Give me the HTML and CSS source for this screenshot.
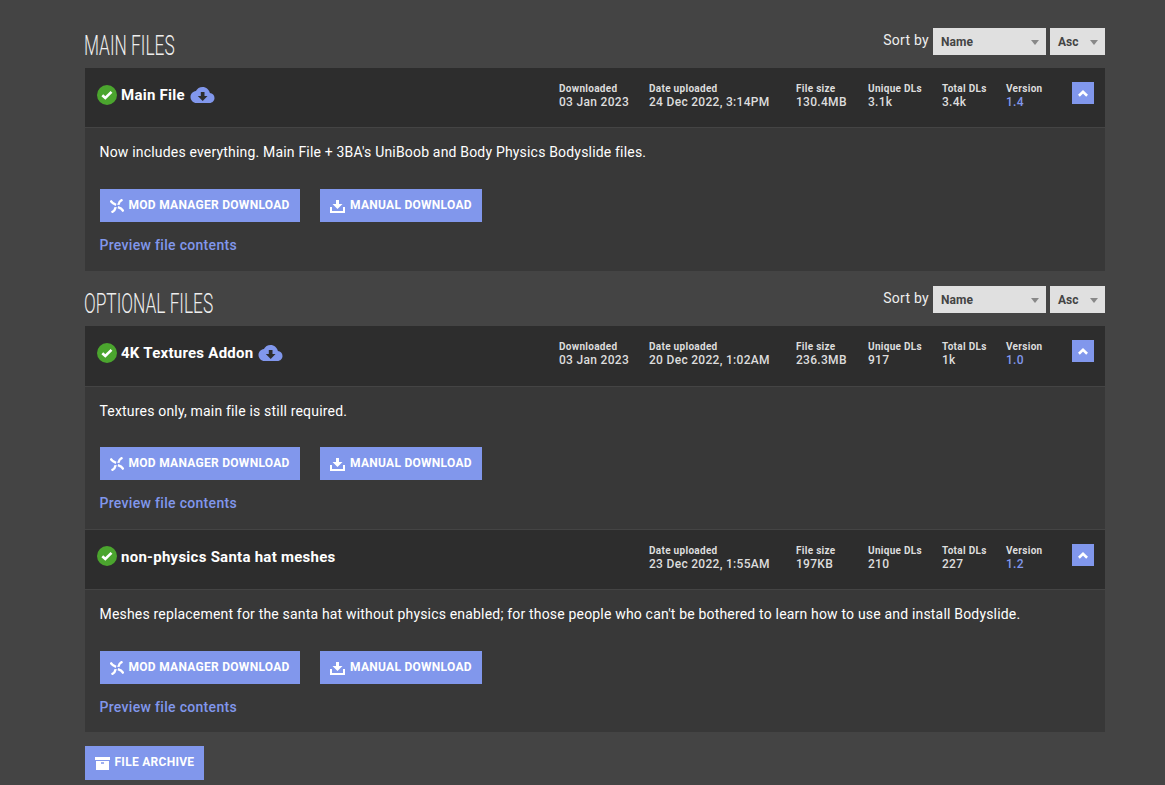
FILE: index.html
```html
<!DOCTYPE html>
<html lang="en">
<head>
    <meta charset="UTF-8">
    <meta name="viewport" content="width=device-width, initial-scale=1.0">
    <title>Mod files</title>
    <link rel="stylesheet" href="styles.css">
</head>
<body>
    <!-- Shared icons -->
    <svg class="icon-defs" width="0" height="0">
        <symbol id="icon-tick" viewBox="0 0 20 20">
            <circle cx="10" cy="10" r="10" fill="#4ba52e"/>
            <path d="M5.300 10.200l3 2.800 6.200-6.200" fill="none" stroke="#fff" stroke-width="2.600"/>
        </symbol>
        <symbol id="icon-cloud" viewBox="0 0 24 16">
            <path fill="#8197ec" fill-rule="evenodd" d="M19.4 6.1C18.7 2.6 15.700 0 12 0 9.100 0 6.600 1.600 5.400 4.100 2.300 4.400 0 7 0 10c0 3.300 2.700 6 6 6h13c2.800 0 5-2.200 5-5 0-2.600-2-4.700-4.600-4.900zM10.300 5h3.700v4h3l-4.800 5-4.900-5h3z"/>
        </symbol>
        <symbol id="icon-nmm" viewBox="0 0 14 14">
            <path fill="none" stroke="#fff" stroke-width="2.400" d="M.5 1.600c1 2 2.900 3.300 5.600 4.200M12.500.7C10.300 1.500 8.800 3.200 8.300 5.900M13.500 12.400c-1-2-2.900-3.300-5.600-4.200M1.500 13.300c2.200-.8 3.700-2.500 4.200-5.200"/>
        </symbol>
        <symbol id="icon-manual" viewBox="0 0 15 13">
            <path fill="#fff" d="M6 0h3v4h3.500L7.500 9l-5-5H6zM0 7h2v4h11V7h2v6H0z"/>
        </symbol>
        <symbol id="icon-archive" viewBox="0 0 15 13">
            <path fill="#fff" fill-rule="evenodd" d="M0 0h15v3H0zM1 4h13v9H1zM6 5.300v1.400h3V5.300z"/>
        </symbol>
        <symbol id="icon-up" viewBox="0 0 10 7">
            <path fill="none" stroke="#fff" stroke-width="2.600" d="M.9 5.800L5 1.900l4.100 3.900"/>
        </symbol>
    </svg>

    <div class="files">
        <section class="file-category">
            <div class="category-header">
                <h2><span>MAIN FILES</span></h2>
                <div class="sort">
                    <label>Sort by</label>
                    <div class="select select-name">Name</div>
                    <div class="select select-order">Asc</div>
                </div>
            </div>

            <div class="file">
                <div class="file-header">
                    <svg class="tick"><use href="#icon-tick"/></svg>
                    <p>Main File</p>
                    <svg class="cloud"><use href="#icon-cloud"/></svg>
                    <ul class="stats">
                        <li class="stat-downloaded"><span>Downloaded</span>03 Jan 2023</li>
                        <li class="stat-date"><span>Date uploaded</span>24 Dec 2022, 3:14PM</li>
                        <li class="stat-size"><span>File size</span>130.4MB</li>
                        <li class="stat-unique"><span>Unique DLs</span>3.1k</li>
                        <li class="stat-total"><span>Total DLs</span>3.4k</li>
                        <li class="stat-version"><span>Version</span><b>1.4</b></li>
                    </ul>
                    <a class="toggle"><svg><use href="#icon-up"/></svg></a>
                </div>
                <div class="file-body tall">
                    <p>Now includes everything. Main File + 3BA's UniBoob and Body Physics Bodyslide files.</p>
                    <div class="buttons">
                        <a class="btn btn-nmm"><svg><use href="#icon-nmm"/></svg>MOD MANAGER DOWNLOAD</a>
                        <a class="btn btn-manual"><svg><use href="#icon-manual"/></svg>MANUAL DOWNLOAD</a>
                    </div>
                    <a class="preview">Preview file contents</a>
                </div>
            </div>
        </section>

        <section class="file-category optional">
            <div class="category-header">
                <h2><span>OPTIONAL FILES</span></h2>
                <div class="sort">
                    <label>Sort by</label>
                    <div class="select select-name">Name</div>
                    <div class="select select-order">Asc</div>
                </div>
            </div>

            <div class="file">
                <div class="file-header tall">
                    <svg class="tick"><use href="#icon-tick"/></svg>
                    <p>4K Textures Addon</p>
                    <svg class="cloud"><use href="#icon-cloud"/></svg>
                    <ul class="stats">
                        <li class="stat-downloaded"><span>Downloaded</span>03 Jan 2023</li>
                        <li class="stat-date"><span>Date uploaded</span>20 Dec 2022, 1:02AM</li>
                        <li class="stat-size"><span>File size</span>236.3MB</li>
                        <li class="stat-unique"><span>Unique DLs</span>917</li>
                        <li class="stat-total"><span>Total DLs</span>1k</li>
                        <li class="stat-version"><span>Version</span><b>1.0</b></li>
                    </ul>
                    <a class="toggle"><svg><use href="#icon-up"/></svg></a>
                </div>
                <div class="file-body short">
                    <p>Textures only, main file is still required.</p>
                    <div class="buttons">
                        <a class="btn btn-nmm"><svg><use href="#icon-nmm"/></svg>MOD MANAGER DOWNLOAD</a>
                        <a class="btn btn-manual"><svg><use href="#icon-manual"/></svg>MANUAL DOWNLOAD</a>
                    </div>
                    <a class="preview">Preview file contents</a>
                </div>
            </div>

            <div class="file">
                <div class="file-header divided">
                    <svg class="tick"><use href="#icon-tick"/></svg>
                    <p>non-physics Santa hat meshes</p>
                    <ul class="stats">
                        <li class="stat-date"><span>Date uploaded</span>23 Dec 2022, 1:55AM</li>
                        <li class="stat-size"><span>File size</span>197KB</li>
                        <li class="stat-unique"><span>Unique DLs</span>210</li>
                        <li class="stat-total"><span>Total DLs</span>227</li>
                        <li class="stat-version"><span>Version</span><b>1.2</b></li>
                    </ul>
                    <a class="toggle"><svg><use href="#icon-up"/></svg></a>
                </div>
                <div class="file-body">
                    <p>Meshes replacement for the santa hat without physics enabled; for those people who can't be bothered to learn how to use and install Bodyslide.</p>
                    <div class="buttons">
                        <a class="btn btn-nmm"><svg><use href="#icon-nmm"/></svg>MOD MANAGER DOWNLOAD</a>
                        <a class="btn btn-manual"><svg><use href="#icon-manual"/></svg>MANUAL DOWNLOAD</a>
                    </div>
                    <a class="preview">Preview file contents</a>
                </div>
            </div>
        </section>

        <a class="btn btn-archive"><svg><use href="#icon-archive"/></svg>FILE ARCHIVE</a>
    </div>
</body>
</html>
```
FILE: styles.css
```css
* {
    box-sizing: border-box;
}
body {
    margin: 0;
    background: #444;
    color: #fff;
    font-family: Roboto, "Liberation Sans", sans-serif;
    font-size: 14px;
    letter-spacing: 0.28px;
    overflow: hidden;
}
h2, p, ul {
    margin: 0;
    padding: 0;
}
.icon-defs {
    display: none;
}
.files {
    width: 1020px;
    margin-left: 85px;
    padding-top: 28px;
}
.category-header {
    display: flex;
    justify-content: space-between;
    height: 40px;
}
.optional {
    margin-top: 15px;
}
h2 {
    font-size: 28px;
    font-weight: 300;
    line-height: 36px;
    letter-spacing: 0;
    color: #eee;
}
h2 span {
    display: inline-block;
    margin-left: -1px;
    transform: scaleX(0.618);
    transform-origin: left;
    white-space: nowrap;
}
.sort {
    display: flex;
    height: 27px;
}
.sort label {
    margin-right: 4px;
    line-height: 25px;
    color: #eee;
}
.select {
    display: flex;
    align-items: center;
    justify-content: space-between;
    padding: 0 7px 0 8px;
    background: #e0e0e0;
    color: #444;
    font-size: 12px;
    font-weight: 700;
    letter-spacing: 0.05px;
}
.select::after {
    content: "";
    margin-top: 2px;
    border: 4px solid transparent;
    border-top: 5px solid #888;
    border-bottom: 0;
}
.select-name {
    width: 113px;
    margin-right: 4px;
}
.select-order {
    width: 55px;
}
.file-header {
    display: flex;
    height: 60px;
    padding: 14px 11px 0 12px;
    background: #2d2d2d;
    border-bottom: 1px solid #444;
}
.file-header.tall {
    height: 61px;
}
.file-header.divided {
    height: 61px;
    border-top: 1px solid #444;
}
.tick {
    width: 20px;
    height: 20px;
    margin: 3px 4px 0 0;
}
.divided .tick {
    margin-top: 2px;
}
.file-header p {
    font-size: 15px;
    font-weight: 700;
    line-height: 26px;
    letter-spacing: 0.26px;
}
.cloud {
    width: 25px;
    height: 16px;
    margin: 5px 0 0 5px;
}
.stats {
    display: flex;
    margin-left: auto;
    list-style: none;
    font-size: 12px;
    font-weight: 500;
    line-height: 14px;
    letter-spacing: 0.3px;
    color: #ddd;
}
.stats span {
    display: block;
    font-size: 10px;
    font-weight: 700;
    line-height: 13px;
}
.stats b {
    color: #8197ec;
    font-weight: 500;
}
.stat-downloaded {
    width: 90px;
}
.stat-date {
    width: 147px;
}
.stat-size {
    width: 72px;
}
.stat-unique {
    width: 74px;
}
.stat-total {
    width: 64px;
}
.stat-version {
    width: 66px;
}
.toggle {
    display: flex;
    align-items: center;
    justify-content: center;
    width: 22px;
    height: 22px;
    background: #8197ec;
}
.toggle svg {
    width: 10px;
    height: 7px;
}
.file-body {
    height: 142px;
    padding: 14px 15px 0;
    background: #383838;
}
.file-body.tall {
    height: 143px;
}
.file-body p {
    margin-left: -0.5px;
    line-height: 20px;
    letter-spacing: 0.183px;
}
.buttons {
    display: flex;
    gap: 20px;
    margin-top: 27px;
}
.short .buttons {
    margin-top: 26px;
}
.btn {
    display: flex;
    align-items: center;
    height: 33px;
    padding: 0 0 2px 10px;
    background: #8197ec;
    font-size: 12px;
    font-weight: 700;
}
.btn svg {
    width: 15px;
    height: 13px;
    margin: 3px 5px 0 0;
}
.btn-nmm {
    width: 200px;
}
.btn-nmm svg {
    width: 14px;
    height: 14px;
    margin: 2px 4.5px 0 0;
}
.btn-manual {
    width: 162px;
}
.preview {
    display: block;
    margin: 13px 0 0 -0.5px;
    line-height: 20px;
    font-weight: 500;
    letter-spacing: 0.31px;
    color: #8197ec;
}
.btn-archive {
    width: 119px;
    height: 34px;
    margin-top: 14px;
}
.btn-archive svg {
    margin: 2px 4.5px 0 0;
}
```
